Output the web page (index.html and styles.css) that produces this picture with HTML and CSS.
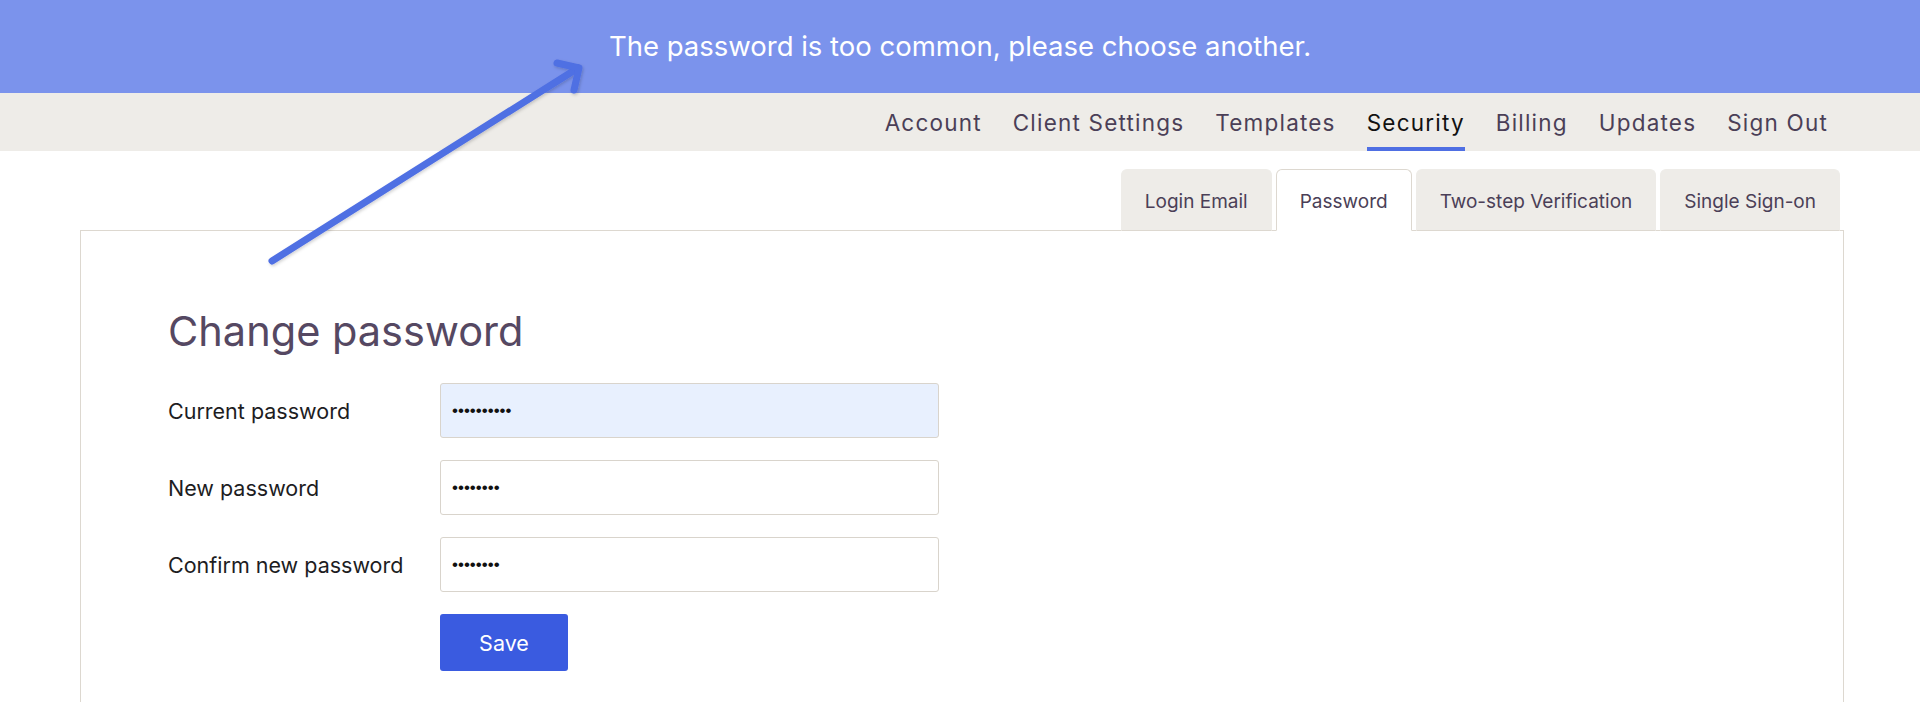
FILE: index.html
```html
<!DOCTYPE html>
<html lang="en">
<head>
<meta charset="utf-8">
<title>Change password</title>
<link rel="stylesheet" href="styles.css">
</head>
<body>
<div class="banner">The password is too common, please choose another.</div>
<nav class="topnav">
  <a class="nav-item">Account</a>
  <a class="nav-item">Client Settings</a>
  <a class="nav-item">Templates</a>
  <a class="nav-item active">Security</a>
  <a class="nav-item">Billing</a>
  <a class="nav-item">Updates</a>
  <a class="nav-item">Sign Out</a>
</nav>
<main class="content">
  <div class="tabs">
    <a class="tab">Login Email</a>
    <a class="tab active">Password</a>
    <a class="tab">Two-step Verification</a>
    <a class="tab">Single Sign-on</a>
  </div>
  <section class="panel">
    <h1 class="title">Change password</h1>
    <form class="form">
      <label class="label" for="cur">Current password</label>
      <input class="field autofill" id="cur" type="password" value="abcdefghij">
      <label class="label" for="new">New password</label>
      <input class="field" id="new" type="password" value="abcdefgh">
      <label class="label" for="conf">Confirm new password</label>
      <input class="field" id="conf" type="password" value="abcdefgh">
      <span></span>
      <div class="actions"><button class="save" type="button">Save</button></div>
    </form>
  </section>
</main>
<svg class="arrow" width="1920" height="702" viewBox="0 0 1920 702" xmlns="http://www.w3.org/2000/svg">
  <defs>
    <filter id="sh" x="-10%" y="-10%" width="120%" height="120%">
      <feDropShadow dx="1" dy="1.5" stdDeviation="1.5" flood-color="#000" flood-opacity="0.18"/>
    </filter>
  </defs>
  <g filter="url(#sh)" stroke="#4f6fe3" stroke-width="7" stroke-linecap="round" stroke-linejoin="round" fill="none">
    <path d="M272 261 L578 68"/>
    <path d="M557 63 L579 68 L574 90"/>
  </g>
</svg>
</body>
</html>
```
FILE: styles.css
```css
* { box-sizing: border-box; }
html, body { margin: 0; padding: 0; }
body {
  font-family: Inter, "Liberation Sans", sans-serif;
  background: #ffffff;
  width: 1920px;
  height: 702px;
  overflow: hidden;
  position: relative;
}
.banner {
  height: 93px;
  background: #7b93ec;
  color: #ffffff;
  font-size: 27.5px;
  display: flex;
  align-items: center;
  justify-content: center;
  padding-bottom: 2px;
}
.topnav {
  height: 58px;
  background: #eeece8;
  display: flex;
  justify-content: flex-end;
  align-items: stretch;
  gap: 31px;
  padding-right: 92px;
}
.nav-item {
  display: flex;
  align-items: center;
  font-size: 22.5px;
  letter-spacing: 1.2px;
  color: #4b3f57;
  border-bottom: 4px solid transparent;
  padding-top: 4px;
}
.nav-item.active {
  color: #111111;
  border-bottom-color: #4f6fe3;
}
.content {
  padding: 18px 76px 0 80px;
}
.tabs {
  display: flex;
  justify-content: flex-end;
  gap: 4px;
  margin-right: 4px;
  margin-bottom: -1px;
  position: relative;
}
.tab {
  height: 62px;
  display: flex;
  align-items: center;
  padding: 2px 23px 0;
  font-size: 19px;
  color: #4b3f57;
  background: #eeece8;
  border: 1px solid #eeece8;
  border-bottom: 1px solid #ddd8d0;
  border-radius: 6px 6px 0 0;
}
.tab.active {
  background: #ffffff;
  border-color: #ddd8d0;
  border-bottom-color: #ffffff;
}
.panel {
  border: 1px solid #ddd8d0;
  border-bottom: none;
  height: 480px;
  padding: 70px 0 0 87px;
}
.title {
  margin: 0 0 22px 0;
  font-size: 41.5px;
  font-weight: 400;
  color: #554862;
  line-height: 60px;
}
.form {
  display: grid;
  grid-template-columns: 272px 499px;
  grid-auto-rows: 55px;
  row-gap: 22px;
  align-items: center;
}
.label {
  font-size: 21.5px;
  color: #1d1d1f;
}
.field {
  height: 55px;
  width: 499px;
  border: 1px solid #d9d4cc;
  border-radius: 3px;
  background: #ffffff;
  padding: 0 11px;
  font-size: 17px;
  color: #111111;
  letter-spacing: 0;
  font-family: "Liberation Sans", sans-serif;
}
.field.autofill {
  background: #e8f0fe;
}
.actions {
  display: flex;
  align-items: flex-start;
}
.save {
  width: 128px;
  height: 57px;
  background: #3a5be0;
  color: #ffffff;
  border: none;
  border-radius: 3px;
  font-family: Inter, "Liberation Sans", sans-serif;
  font-size: 21.5px;
  margin-top: 2px;
}
.arrow {
  position: absolute;
  left: 0;
  top: 0;
  pointer-events: none;
}
```
